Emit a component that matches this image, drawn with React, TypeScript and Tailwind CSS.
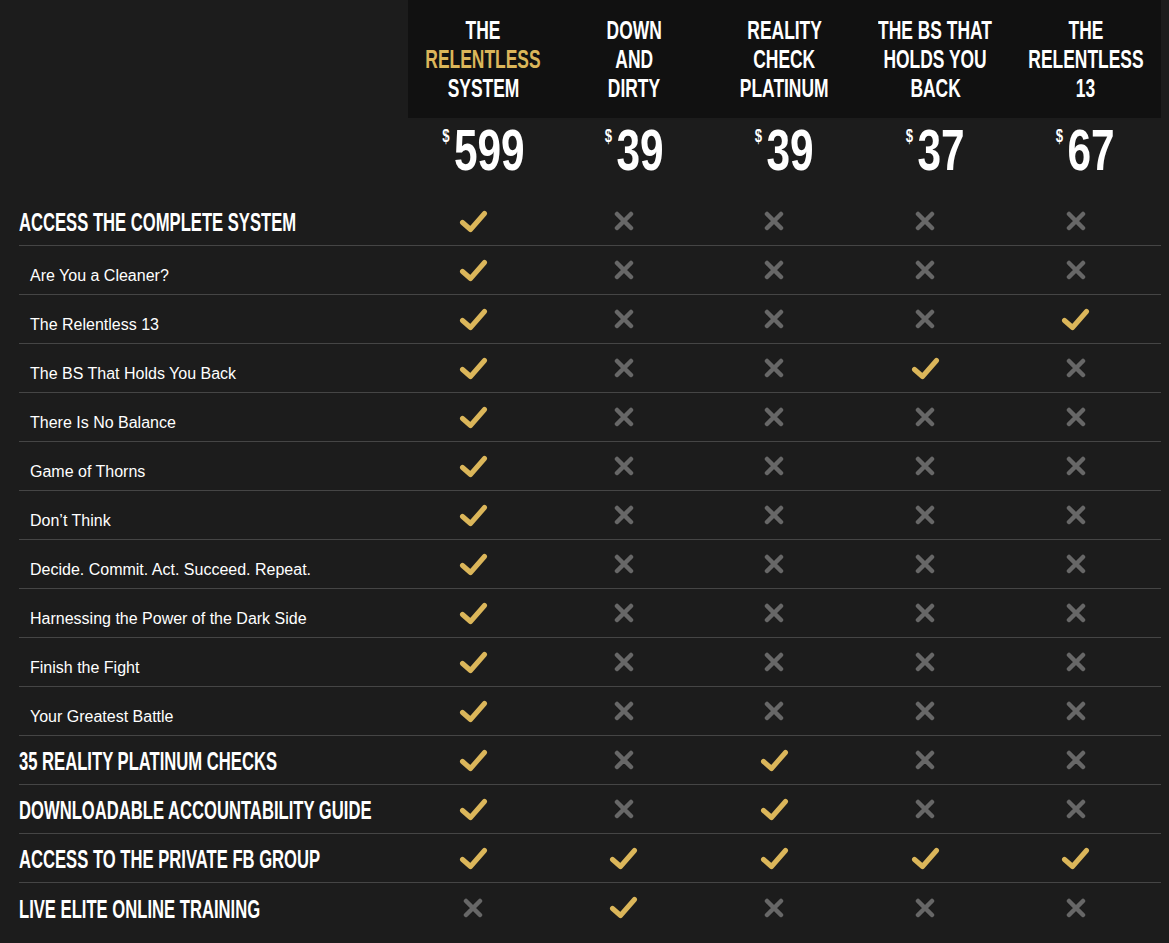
import React from 'react';

const GOLD = '#dbb65a';

const plans = [
  { lines: ['THE', 'RELENTLESS', 'SYSTEM'], gold: 1, price: '599' },
  { lines: ['DOWN', 'AND', 'DIRTY'], price: '39' },
  { lines: ['REALITY', 'CHECK', 'PLATINUM'], price: '39' },
  { lines: ['THE BS THAT', 'HOLDS YOU', 'BACK'], price: '37' },
  { lines: ['THE', 'RELENTLESS', '13'], price: '67' },
];

// big = section heading, otherwise a module inside the system
const rows: { label: string; big?: boolean; has: number[] }[] = [
  { label: 'ACCESS THE COMPLETE SYSTEM', big: true, has: [1, 0, 0, 0, 0] },
  { label: 'Are You a Cleaner?', has: [1, 0, 0, 0, 0] },
  { label: 'The Relentless 13', has: [1, 0, 0, 0, 1] },
  { label: 'The BS That Holds You Back', has: [1, 0, 0, 1, 0] },
  { label: 'There Is No Balance', has: [1, 0, 0, 0, 0] },
  { label: 'Game of Thorns', has: [1, 0, 0, 0, 0] },
  { label: 'Don’t Think', has: [1, 0, 0, 0, 0] },
  { label: 'Decide. Commit. Act. Succeed. Repeat.', has: [1, 0, 0, 0, 0] },
  { label: 'Harnessing the Power of the Dark Side', has: [1, 0, 0, 0, 0] },
  { label: 'Finish the Fight', has: [1, 0, 0, 0, 0] },
  { label: 'Your Greatest Battle', has: [1, 0, 0, 0, 0] },
  { label: '35 REALITY PLATINUM CHECKS', big: true, has: [1, 0, 1, 0, 0] },
  { label: 'DOWNLOADABLE ACCOUNTABILITY GUIDE', big: true, has: [1, 0, 1, 0, 0] },
  { label: 'ACCESS TO THE PRIVATE FB GROUP', big: true, has: [1, 1, 1, 1, 1] },
  { label: 'LIVE ELITE ONLINE TRAINING', big: true, has: [0, 1, 0, 0, 0] },
];

// no condensed face installed, so squeeze the bold sans horizontally
const condensed = "font-['Liberation_Sans',Arial,sans-serif] font-bold";

function Check() {
  return (
    <svg width="29" height="23" viewBox="0 0 29 23" fill="none">
      <path d="M3.5 12.5 L11.5 19.5 L25.5 3.5" stroke={GOLD} strokeWidth="5" strokeLinecap="round" strokeLinejoin="round" />
    </svg>
  );
}

function Cross() {
  return (
    <svg width="20" height="20" viewBox="0 0 20 20" fill="none">
      <path d="M3 3 L17 17 M17 3 L3 17" stroke="#676767" strokeWidth="4.5" strokeLinecap="round" />
    </svg>
  );
}

export default function App() {
  return (
    <div className="min-h-screen bg-[#1c1c1c] font-['Liberation_Sans',Arial,sans-serif] text-white">
      <div className="w-[1142px] ml-[19px]">
        {/* plan headers */}
        <div className="grid grid-cols-[389px_repeat(5,minmax(0,1fr))]">
          <div />
          <div className="col-span-5 grid grid-cols-5 h-[118px] bg-[#111111]">
            {plans.map((p) => (
              <div key={p.price + p.lines[0]} className="flex flex-col items-center justify-center">
                {p.lines.map((l, i) => (
                  <div
                    key={l}
                    className={`${condensed} text-[26px] leading-[29px] scale-x-[0.67] whitespace-nowrap`}
                    style={i === p.gold ? { color: GOLD } : undefined}
                  >
                    {l}
                  </div>
                ))}
              </div>
            ))}
          </div>
        </div>

        {/* prices */}
        <div className="grid grid-cols-[389px_repeat(5,minmax(0,1fr))] h-[79px]">
          <div />
          {plans.map((p) => (
            <div key={p.price + p.lines[0]} className="flex items-start justify-center pt-[8px]">
              <div className={`${condensed} flex items-start scale-x-[0.73]`}>
                <span className="text-[18px] leading-none mt-[1px] mr-[6px]">$</span>
                <span className="text-[58px] leading-[48px]">{p.price}</span>
              </div>
            </div>
          ))}
        </div>

        {/* feature rows */}
        {rows.map((r, ri) => (
          <div
            key={r.label}
            className={`grid grid-cols-[389px_repeat(5,minmax(0,1fr))] h-[49px] ${
              ri < rows.length - 1 ? 'border-b border-[#454545]' : ''
            }`}
          >
            <div className="flex items-center">
              {r.big ? (
                <span className={`${condensed} pt-[4px] text-[25px] scale-x-[0.665] origin-left whitespace-nowrap`}>
                  {r.label}
                </span>
              ) : (
                <span className="pl-[11px] pt-[12px] text-[16px]">{r.label}</span>
              )}
            </div>
            {r.has.map((h, i) => (
              <div key={i} className="flex items-center justify-center pr-[20px]">
                {h ? <Check /> : <Cross />}
              </div>
            ))}
          </div>
        ))}
      </div>
    </div>
  );
}
